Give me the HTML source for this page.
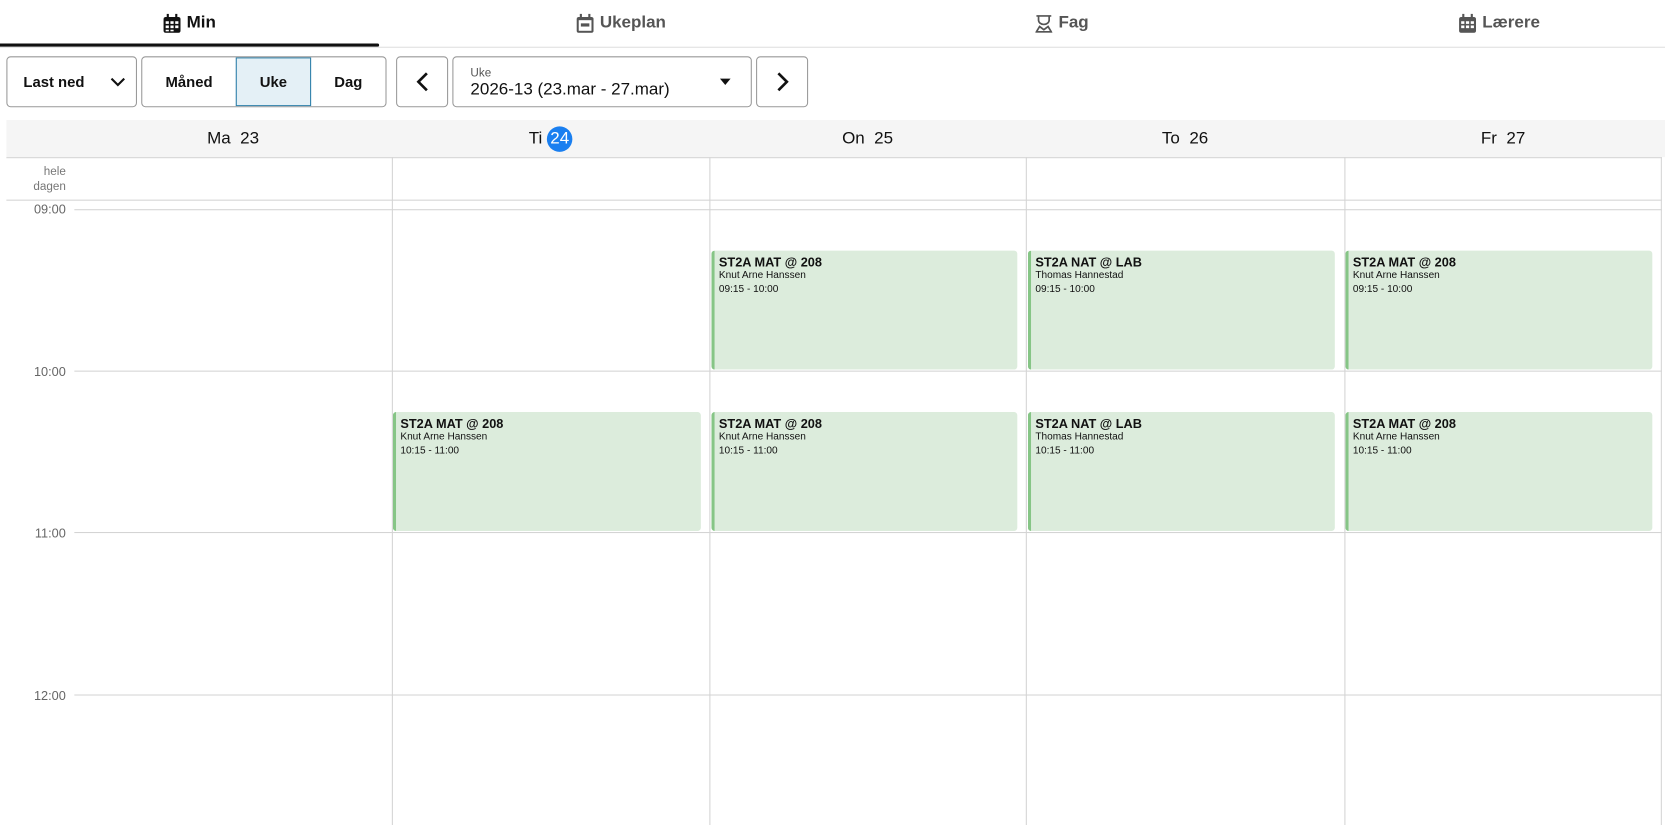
<!DOCTYPE html>
<html><head><meta charset="utf-8"><style>
*{box-sizing:border-box;margin:0;padding:0}
body{width:1665px;height:777px;overflow:hidden;background:#fff;font-family:"Liberation Sans",Arial,sans-serif;color:#111;position:relative}
#w{position:absolute;left:0;top:0;width:1568px;height:732px;transform:scale(1.0619);transform-origin:0 0}
.abs{position:absolute}
.tab{position:absolute;top:0;height:44px;display:flex;align-items:center;justify-content:center;font-size:16px;font-weight:bold;color:#555;gap:6px}
.btn{position:absolute;top:53px;height:48px;border:1px solid #999;border-radius:4px;background:#fff;display:flex;align-items:center;justify-content:center;font-size:14px;font-weight:bold}
.vl{position:absolute;width:1px;background:#d4d4d4}
.hl{position:absolute;height:1px;background:#d4d4d4}
.dh{position:absolute;top:113px;height:35px;display:flex;align-items:center;justify-content:center;font-size:16px}
.tl{position:absolute;left:0;width:62px;text-align:right;font-size:12px;color:#666}
.ev{position:absolute;background:#dcecdc;border-left:3px solid #86c586;border-radius:3px;padding:4px 4px;font-size:9.5px;line-height:12.5px}
.ev b{font-size:12px;display:block;line-height:14px}
</style></head><body><div id="w">
<div class="tab" style="left:0;width:357px;color:#111"><svg width="16" height="18" viewBox="0 0 16 18"><rect x="0" y="3" width="16" height="15" rx="2" fill="#111"/><rect x="3" y="0" width="2" height="4" fill="#111"/><rect x="11" y="0" width="2" height="4" fill="#111"/><g fill="#fff"><rect x="2" y="7" width="3" height="2.5"/><rect x="6.5" y="7" width="3" height="2.5"/><rect x="11" y="7" width="3" height="2.5"/><rect x="2" y="11" width="3" height="2.5"/><rect x="6.5" y="11" width="3" height="2.5"/><rect x="11" y="11" width="3" height="2.5"/><rect x="2" y="15" width="3" height="1.5"/><rect x="6.5" y="15" width="3" height="1.5"/></g></svg>Min</div>
<div class="abs" style="left:0;top:41px;width:357px;height:3px;background:#111;border-radius:0 2px 2px 0"></div>
<div class="hl" style="left:0;top:44px;width:1568px;background:#e0e0e0"></div>
<div class="tab" style="left:430px;width:310px"><svg width="16" height="18" viewBox="0 0 16 18"><rect x="0" y="3" width="16" height="15" rx="2" fill="#555"/><rect x="3" y="0" width="2" height="4" fill="#555"/><rect x="11" y="0" width="2" height="4" fill="#555"/><rect x="2" y="6" width="12" height="10" fill="#fff"/><rect x="4" y="9" width="8" height="3" fill="#555"/></svg>Ukeplan</div>
<div class="tab" style="left:845px;width:310px"><svg width="16" height="18" viewBox="0 0 16 18" fill="none" stroke="#555" stroke-width="1.6"><path d="M1 2h14M3 2v4a5 4 0 0 0 10 0V2"/><path d="M1 17l3-5 4 3 4-3 3 5z"/></svg>Fag</div>
<div class="tab" style="left:1257px;width:310px"><svg width="16" height="18" viewBox="0 0 16 18"><rect x="0" y="3" width="16" height="15" rx="2" fill="#555"/><rect x="3" y="0" width="2" height="4" fill="#555"/><rect x="11" y="0" width="2" height="4" fill="#555"/><g fill="#fff"><rect x="2" y="7" width="3" height="2.5"/><rect x="6.5" y="7" width="3" height="2.5"/><rect x="11" y="7" width="3" height="2.5"/><rect x="2" y="11" width="3" height="2.5"/><rect x="6.5" y="11" width="3" height="2.5"/><rect x="11" y="11" width="3" height="2.5"/></g></svg>Lærere</div>

<div class="btn" style="left:6px;width:123px;justify-content:flex-start;padding-left:15px">Last ned<svg style="margin-left:24px" width="14" height="9" viewBox="0 0 14 9" fill="none" stroke="#111" stroke-width="2"><path d="M1 1l6 6 6-6"/></svg></div>
<div class="btn" style="left:133px;width:231px;padding:0;justify-content:flex-start;overflow:hidden">
<div style="width:88px;height:100%;display:flex;align-items:center;justify-content:center">Måned</div>
<div style="width:71px;height:100%;display:flex;align-items:center;justify-content:center;background:#e4f0f6;border:1px solid #2b7ea8">Uke</div>
<div style="flex:1;height:100%;display:flex;align-items:center;justify-content:center">Dag</div></div>
<div class="btn" style="left:373px;width:49px"><svg width="12" height="18" viewBox="0 0 12 18" fill="none" stroke="#111" stroke-width="2.5"><path d="M10 1L2 9l8 8"/></svg></div>
<div class="btn" style="left:426px;width:282px;display:block;padding:9px 0 0 16px;font-weight:normal">
<div style="font-size:11px;color:#555">Uke</div><div style="font-size:16px;margin-top:1px">2026-13 (23.mar - 27.mar)</div>
<div class="abs" style="left:251px;top:20px;width:0;height:0;border-left:5px solid transparent;border-right:5px solid transparent;border-top:6px solid #111"></div></div>
<div class="btn" style="left:712px;width:49px"><svg width="12" height="18" viewBox="0 0 12 18" fill="none" stroke="#111" stroke-width="2.5"><path d="M2 1l8 8-8 8"/></svg></div>

<div class="abs" style="left:6px;top:113px;width:1562px;height:35px;background:#f5f5f5"></div>
<div class="hl" style="left:6px;top:148px;width:1559px"></div>
<div class="dh" style="left:70px;width:299px">Ma&nbsp;&nbsp;23</div>
<div class="dh" style="left:369px;width:299px">Ti&nbsp;<span style="display:inline-block;width:24px;height:24px;border-radius:12px;background:#1a7ff0;color:#fff;text-align:center;line-height:24px">24</span></div>
<div class="dh" style="left:668px;width:298px">On&nbsp;&nbsp;25</div>
<div class="dh" style="left:966px;width:300px">To&nbsp;&nbsp;26</div>
<div class="dh" style="left:1266px;width:299px">Fr&nbsp;&nbsp;27</div>

<div class="abs" style="left:20px;top:155px;width:42px;text-align:right;font-size:11px;color:#777;line-height:14px">hele<br>dagen</div>
<div class="hl" style="left:6px;top:188px;width:1559px"></div>
<div class="vl" style="left:369px;top:148px;height:629px"></div>
<div class="vl" style="left:668px;top:148px;height:629px"></div>
<div class="vl" style="left:966px;top:148px;height:629px"></div>
<div class="vl" style="left:1266px;top:148px;height:629px"></div>
<div class="vl" style="left:1564px;top:148px;height:629px"></div>

<div class="hl" style="left:70px;top:197px;width:1495px"></div>
<div class="hl" style="left:70px;top:349px;width:1495px"></div>
<div class="hl" style="left:70px;top:501px;width:1495px"></div>
<div class="hl" style="left:70px;top:654px;width:1495px"></div>
<div class="tl" style="top:190px">09:00</div>
<div class="tl" style="top:343px">10:00</div>
<div class="tl" style="top:495px">11:00</div>
<div class="tl" style="top:648px">12:00</div>

<div class="ev" style="left:670px;top:236px;width:288px;height:112px"><b>ST2A MAT @ 208</b>Knut Arne Hanssen<br>09:15 - 10:00</div>
<div class="ev" style="left:968px;top:236px;width:289px;height:112px"><b>ST2A NAT @ LAB</b>Thomas Hannestad<br>09:15 - 10:00</div>
<div class="ev" style="left:1267px;top:236px;width:289px;height:112px"><b>ST2A MAT @ 208</b>Knut Arne Hanssen<br>09:15 - 10:00</div>
<div class="ev" style="left:370px;top:388px;width:290px;height:112px"><b>ST2A MAT @ 208</b>Knut Arne Hanssen<br>10:15 - 11:00</div>
<div class="ev" style="left:670px;top:388px;width:288px;height:112px"><b>ST2A MAT @ 208</b>Knut Arne Hanssen<br>10:15 - 11:00</div>
<div class="ev" style="left:968px;top:388px;width:289px;height:112px"><b>ST2A NAT @ LAB</b>Thomas Hannestad<br>10:15 - 11:00</div>
<div class="ev" style="left:1267px;top:388px;width:289px;height:112px"><b>ST2A MAT @ 208</b>Knut Arne Hanssen<br>10:15 - 11:00</div>
</div></body></html>
